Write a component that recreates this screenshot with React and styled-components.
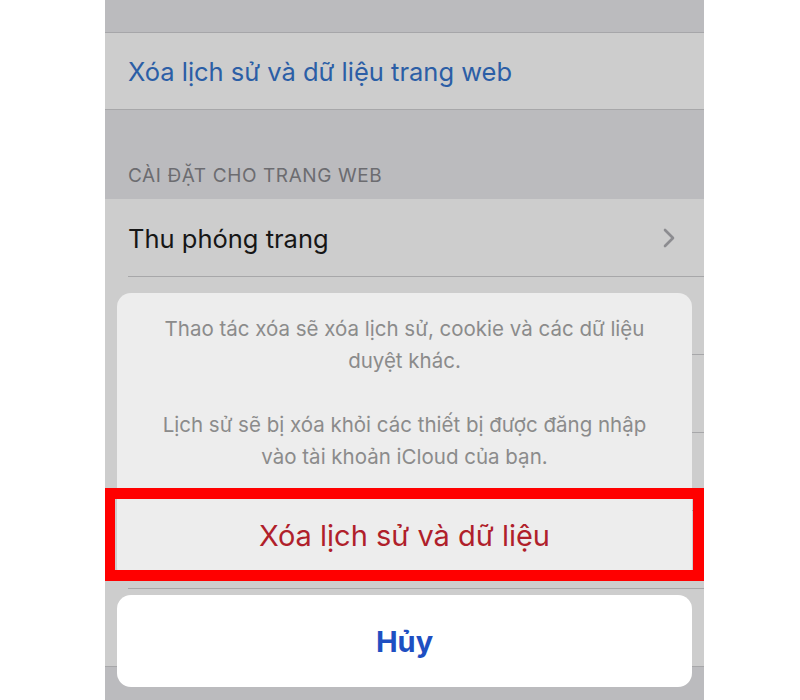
import React from "react";
import styled, { createGlobalStyle } from "styled-components";

const GlobalStyle = createGlobalStyle`
  html, body {
    margin: 0;
    padding: 0;
    background: #ffffff;
  }
  body {
    font-family: Inter, "Noto Sans", sans-serif;
  }
`;

const Stage = styled.div`
  width: 800px;
  height: 700px;
  display: flex;
  padding-left: 105px;
  box-sizing: border-box;
`;

const Phone = styled.div`
  position: relative;
  width: 599px;
  height: 700px;
  overflow: hidden;
  background: #bbbbbe;
  display: flex;
  flex-direction: column;
`;

const TopBand = styled.div`
  height: 32px;
  flex-shrink: 0;
  border-bottom: 1px solid #a6a6a9;
`;

const Row = styled.div`
  height: ${(p) => p.h || 78}px;
  flex-shrink: 0;
  box-sizing: border-box;
  background: #cdcdcd;
  display: flex;
  align-items: center;
  justify-content: space-between;
  padding: 0 28px 0 23px;
  font-size: 25.5px;
  color: ${(p) => (p.action ? "#2b5ea6" : "#161616")};
  position: relative;

  &::after {
    content: "";
    position: absolute;
    left: ${(p) => (p.last ? 0 : 23)}px;
    right: 0;
    bottom: 0;
    height: 1px;
    background: #a7a7a9;
  }
`;

const SectionHeader = styled.div`
  height: 89px;
  flex-shrink: 0;
  box-sizing: border-box;
  display: flex;
  align-items: flex-end;
  padding: 0 0 12px 23px;
  font-size: 19px;
  letter-spacing: 0.6px;
  color: #6c6c70;
`;

const Chevron = () => (
  <svg width="14" height="20" viewBox="0 0 14 20">
    <polyline
      points="3,2 11,10 3,18"
      fill="none"
      stroke="#8c8c90"
      strokeWidth="2.6"
      strokeLinecap="round"
      strokeLinejoin="round"
    />
  </svg>
);

const Sheet = styled.div`
  position: absolute;
  left: 12px;
  right: 12px;
  top: 293px;
  display: flex;
  flex-direction: column;
  gap: 14px;
`;

const Group = styled.div`
  background: #ededed;
  border-radius: 14px;
  overflow: hidden;
  display: flex;
  flex-direction: column;
`;

const Message = styled.div`
  padding: 20px 10px 16px;
  text-align: center;
  color: #8b8b8b;
  font-size: 20.5px;
  line-height: 32px;

  p {
    margin: 0;
  }
  p + p {
    margin-top: 32px;
  }
`;

const ActionButton = styled.div`
  height: 92px;
  display: flex;
  align-items: center;
  justify-content: center;
  border-top: 1px solid #c8c8c8;
  box-sizing: border-box;
  font-size: 29px;
  font-weight: ${(p) => (p.cancel ? 700 : 400)};
  color: ${(p) => (p.destructive ? "#b01f2b" : "#1e4fc2")};
  background: ${(p) => (p.cancel ? "#ffffff" : "transparent")};
  border-radius: ${(p) => (p.cancel ? "14px" : "0")};
  ${(p) => p.cancel && "border-top: none;"}
`;

const Highlight = styled.div`
  position: absolute;
  left: 0;
  right: 0;
  top: 488px;
  height: 93px;
  box-sizing: border-box;
  border: 11px solid #ff0000;
  border-left-width: 10px;
  pointer-events: none;
`;

export default function App() {
  return (
    <>
      <GlobalStyle />
      <Stage>
        <Phone>
          <TopBand />
          <Row h={77} action last>
            Xóa lịch sử và dữ liệu trang web
          </Row>
          <SectionHeader>CÀI ĐẶT CHO TRANG WEB</SectionHeader>
          <Row>
            Thu phóng trang
            <Chevron />
          </Row>
          <Row />
          <Row />
          <Row />
          <Row />
          <Row last />

          <Sheet>
            <Group>
              <Message>
                <p>
                  Thao tác xóa sẽ xóa lịch sử, cookie và các dữ liệu
                  <br />
                  duyệt khác.
                </p>
                <p>
                  Lịch sử sẽ bị xóa khỏi các thiết bị được đăng nhập
                  <br />
                  vào tài khoản iCloud của bạn.
                </p>
              </Message>
              <ActionButton destructive>Xóa lịch sử và dữ liệu</ActionButton>
            </Group>
            <ActionButton cancel>Hủy</ActionButton>
          </Sheet>

          <Highlight />
        </Phone>
      </Stage>
    </>
  );
}
